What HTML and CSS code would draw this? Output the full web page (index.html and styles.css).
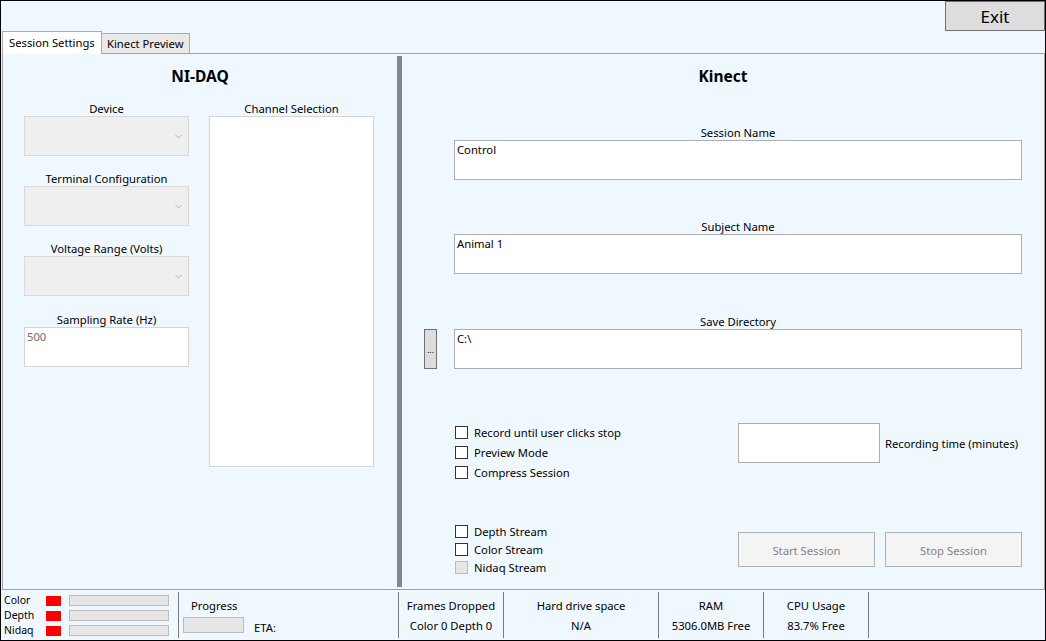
FILE: index.html
```html
<!DOCTYPE html>
<html>
<head>
<meta charset="utf-8">
<link rel="stylesheet" href="styles.css">
</head>
<body>
<div class="window">
  <div class="topbar"><button class="exit">Exit</button></div>
  <div class="tabstrip">
    <div class="tab active">Session Settings</div>
    <div class="tab">Kinect Preview</div>
  </div>
  <div class="panel">
    <section class="nidaq">
      <h2 class="heading">NI-DAQ</h2>
      <div class="nidaq-cols">
        <div class="ctl-col">
          <div class="lbl">Device</div>
          <div class="combo"><svg width="7" height="5" viewBox="0 0 7 5"><path d="M0.5 1 L3.5 4 L6.5 1" fill="none" stroke="#b4b4b4" stroke-width="1"/></svg></div>
          <div class="lbl mt12">Terminal Configuration</div>
          <div class="combo"><svg width="7" height="5" viewBox="0 0 7 5"><path d="M0.5 1 L3.5 4 L6.5 1" fill="none" stroke="#b4b4b4" stroke-width="1"/></svg></div>
          <div class="lbl mt12">Voltage Range (Volts)</div>
          <div class="combo"><svg width="7" height="5" viewBox="0 0 7 5"><path d="M0.5 1 L3.5 4 L6.5 1" fill="none" stroke="#b4b4b4" stroke-width="1"/></svg></div>
          <div class="lbl mt13">Sampling Rate (Hz)</div>
          <div class="tbox disabled">500</div>
        </div>
        <div class="chan-col">
          <div class="lbl">Channel Selection</div>
          <div class="listbox"></div>
        </div>
      </div>
    </section>
    <div class="splitter"></div>
    <section class="kinect">
      <h2 class="heading">Kinect</h2>
      <div class="kfields">
        <div class="field f1">
          <div class="lbl">Session Name</div>
          <div class="tbox">Control</div>
        </div>
        <div class="field f2">
          <div class="lbl">Subject Name</div>
          <div class="tbox">Animal 1</div>
        </div>
        <div class="saverow">
          <button class="browse">...</button>
          <div class="field">
            <div class="lbl">Save Directory</div>
            <div class="tbox">C:\</div>
          </div>
        </div>
        <div class="opts">
          <div class="cbgroup">
            <div class="cb"><span class="box"></span>Record until user clicks stop</div>
            <div class="cb"><span class="box"></span>Preview Mode</div>
            <div class="cb"><span class="box"></span>Compress Session</div>
          </div>
          <div class="tbox rec"></div>
          <div class="reclbl">Recording time (minutes)</div>
        </div>
        <div class="bottomrow">
          <div class="cbgroup small">
            <div class="cb"><span class="box"></span>Depth Stream</div>
            <div class="cb"><span class="box"></span>Color Stream</div>
            <div class="cb"><span class="box off"></span>Nidaq Stream</div>
          </div>
          <div class="btns">
            <button class="btn">Start Session</button>
            <button class="btn">Stop Session</button>
          </div>
        </div>
      </div>
    </section>
  </div>
  <div class="status">
    <div class="cell c1">
      <div class="srow"><span class="slbl">Color</span><span class="led"></span><span class="sbar"></span></div>
      <div class="srow"><span class="slbl">Depth</span><span class="led"></span><span class="sbar"></span></div>
      <div class="srow"><span class="slbl">Nidaq</span><span class="led"></span><span class="sbar"></span></div>
    </div>
    <div class="cell c2">
      <div class="plbl">Progress</div>
      <div class="prow"><span class="pbar"></span><span class="eta">ETA:</span></div>
    </div>
    <div class="cell c3 ctr"><div>Frames Dropped</div><div>Color 0 Depth 0</div></div>
    <div class="cell c4 ctr"><div>Hard drive space</div><div>N/A</div></div>
    <div class="cell c5 ctr"><div>RAM</div><div>5306.0MB Free</div></div>
    <div class="cell c6 ctr"><div>CPU Usage</div><div>83.7% Free</div></div>
    <div class="cell c7"></div>
  </div>
</div>
</body>
</html>
```
FILE: styles.css
```css
* { box-sizing: border-box; }
html, body { margin: 0; padding: 0; }
body {
  font-family: "Noto Sans", "Open Sans", sans-serif;
  font-size: 11.25px;
  color: #000;
  background: #fff;
}
.window {
  width: 1046px;
  height: 641px;
  border: 1px solid #000;
  background: #f0f8ff;
  display: flex;
  flex-direction: column;
}
.topbar {
  height: 30px;
  flex: none;
  display: flex;
  justify-content: flex-end;
}
.exit {
  width: 100px;
  height: 30px;
  margin: 0;
  padding: 2px 0 0;
  border: 1px solid #707070;
  background: #dddddd;
  font-family: "Noto Sans", sans-serif;
  font-size: 17px;
  color: #000;
  line-height: 26px;
}
.tabstrip {
  height: 22px;
  flex: none;
  display: flex;
  align-items: flex-end;
  padding-left: 1px;
  position: relative;
  z-index: 1;
}
.tab {
  height: 20px;
  width: 89px;
  margin-left: -1px;
  padding: 0 5px;
  border: 1px solid #acacac;
  border-bottom: none;
  background: #e9e9e9;
  line-height: 19px;
  white-space: nowrap;
}
.tab.active {
  width: 100px;
  height: 23px;
  margin-left: 0;
  margin-bottom: -1px;
  padding: 0 6px;
  background: #fff;
  line-height: 22px;
}
.panel {
  flex: none;
  height: 537px;
  margin-left: 1px;
  border: 1px solid #a0a0a0;
  display: flex;
}
.heading {
  margin: 0;
  height: 44px;
  line-height: 44px;
  text-align: center;
  font-size: 15.5px;
  font-weight: 700;
}
.nidaq { width: 394px; flex: none; }
.nidaq-cols {
  display: flex;
  gap: 20px;
  padding-left: 21px;
}
.ctl-col, .chan-col { width: 165px; }
.lbl {
  height: 18px;
  line-height: 21px;
  text-align: center;
  white-space: nowrap;
}
.mt12 { margin-top: 12px; }
.mt13 { margin-top: 13px; }
.combo {
  height: 40px;
  border: 1px solid #d9d9d9;
  background: #efefef;
  display: flex;
  align-items: center;
  justify-content: flex-end;
  padding-right: 6px;
}
.tbox {
  height: 40px;
  border: 1px solid #abadb3;
  background: #fff;
  padding: 1px 2px 0;
  line-height: 16px;
}
.tbox.disabled {
  border-color: #d5d5d5;
  color: #6d6d6d;
}
.listbox {
  height: 351px;
  border: 1px solid #d5d5d5;
  background: #fff;
}
.splitter {
  width: 5px;
  flex: none;
  margin: 2px 0;
  background: #868686;
}
.kinect { width: 642px; flex: none; }
.kfields { padding-left: 52px; }
.field { width: 568px; }
.f1 { margin-top: 24px; }
.f2 { margin-top: 36px; }
.saverow {
  display: flex;
  margin-top: 37px;
  margin-left: -30px;
}
.browse {
  align-self: flex-end;
  width: 13px;
  height: 40px;
  margin: 0 17px 0 0;
  padding: 0;
  border: 1px solid #707070;
  background: #dddddd;
  font-family: "Noto Sans", sans-serif;
  font-size: 9px;
  color: #000;
}
.opts {
  display: flex;
  margin-top: 54px;
  padding-left: 1px;
  height: 60px;
}
.cbgroup { width: 283px; flex: none; }
.opts .cbgroup { margin-top: -1px; }
.cb {
  display: flex;
  align-items: center;
  height: 20px;
  white-space: nowrap;
}
.small .cb { height: 18px; }
.box {
  width: 13px;
  height: 13px;
  border: 1px solid #333;
  background: #fff;
  margin-right: 6px;
  flex: none;
}
.box.off {
  border-color: #bcbcbc;
  background: #e6e6e6;
}
.rec { width: 142px; flex: none; }
.reclbl {
  margin-left: 5px;
  line-height: 41px;
  height: 40px;
  white-space: nowrap;
}
.bottomrow {
  display: flex;
  margin-top: 39px;
  padding-left: 1px;
}
.btns {
  display: flex;
  gap: 10px;
  margin-top: 10px;
}
.btn {
  width: 137px;
  height: 35px;
  margin: 0;
  padding: 1px 0 0;
  border: 1px solid #adb2b5;
  background: #f4f4f4;
  color: #838383;
  font-family: "Noto Sans", sans-serif;
  font-size: 11.25px;
}
.status {
  flex: none;
  height: 50px;
  display: flex;
  padding: 2px 0;
}
.cell {
  height: 46px;
  border-right: 1px solid #7a7a7a;
  flex: none;
}
.c1 { width: 178px; padding: 1px 0 0 3px; }
.c2 { width: 220px; }
.c3 { width: 105px; }
.c4 { width: 155px; }
.c5 { width: 105px; }
.c6 { width: 105px; }
.c7 { flex: 1; border-right: none; }
.srow {
  display: flex;
  align-items: center;
  height: 15px;
}
.slbl {
  width: 42px;
  font-size: 10.5px;
  line-height: 15px;
}
.led {
  width: 15px;
  height: 10px;
  background: #ff0000;
}
.sbar {
  margin-left: 8px;
  width: 100px;
  height: 11px;
  background: #e6e6e6;
  border: 1px solid #bcbcbc;
}
.plbl {
  margin-left: 12px;
  padding-top: 4px;
  line-height: 20px;
}
.prow {
  display: flex;
  margin-top: 1px;
}
.pbar {
  margin-left: 4px;
  width: 61px;
  height: 16px;
  background: #e6e6e6;
  border: 1px solid #bcbcbc;
}
.eta {
  margin-left: 10px;
  padding-top: 3px;
  line-height: 16px;
}
.ctr {
  text-align: center;
  padding-top: 4px;
  line-height: 20px;
  white-space: nowrap;
}
```
